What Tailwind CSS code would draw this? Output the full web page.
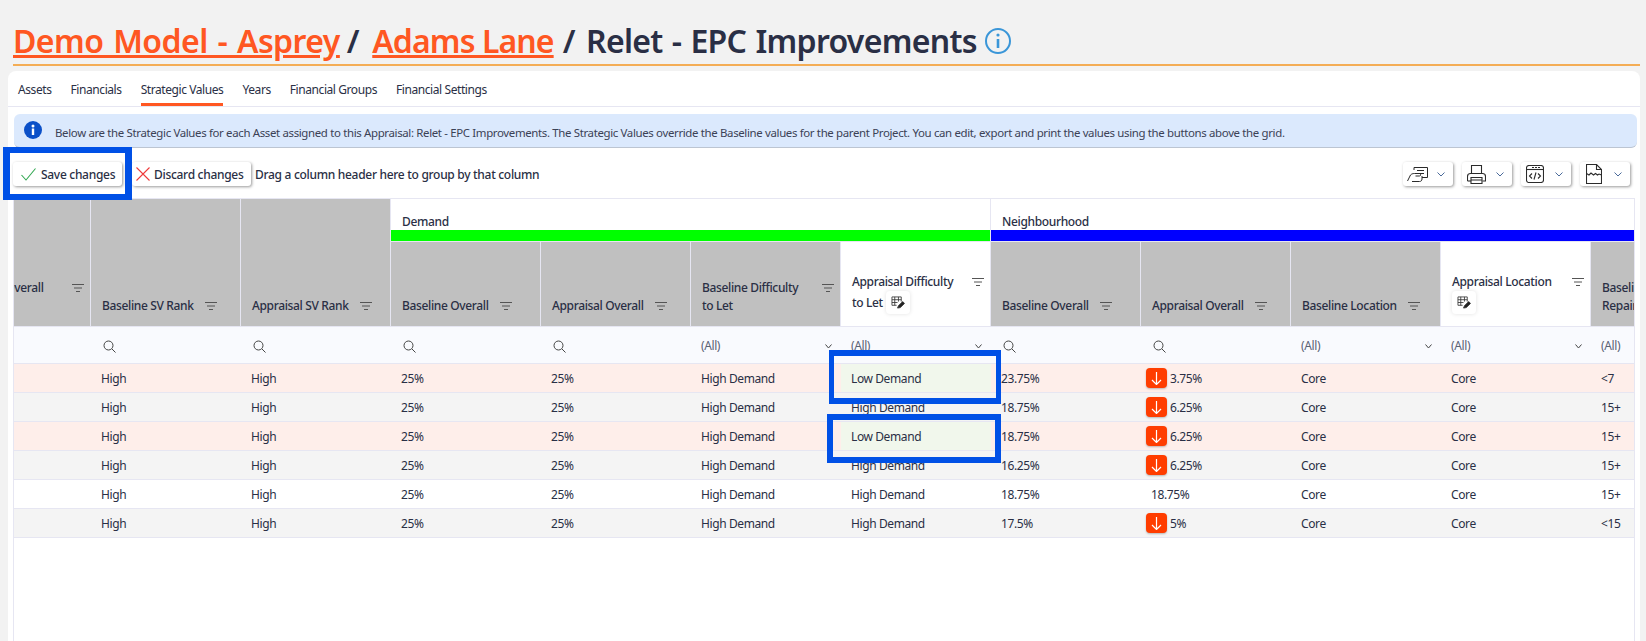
<!DOCTYPE html>
<html lang="en">
<head>
    <meta charset="UTF-8">
    <title>Strategic Values</title>
    <script src="https://cdn.jsdelivr.net/npm/@tailwindcss/browser@4"></script>
</head>
<body class="bg-[#f2f2f2] h-[641px] overflow-hidden relative font-['Noto_Sans',sans-serif] text-[#2a2f45] text-[12px] tracking-[-0.35px]">

    <!-- title -->
    <div class="h-[71px] pl-[13px] pr-[6px]">
        <div class="h-[66px] border-b-2 border-[#f4ad55] flex items-end pb-[1px]">
            <h1 class="text-[32px] leading-[44px] font-semibold flex items-center whitespace-nowrap">
                <a class="text-[#ff5722] underline tracking-[-0.55px] [word-spacing:2px]">Demo Model - Asprey</a>
                <span class="ml-[7px] mr-[13px]">/</span>
                <a class="text-[#ff5722] underline tracking-[-0.9px]">Adams Lane</a>
                <span class="ml-[9px] mr-[11px]">/</span>
                <span class="tracking-[-0.7px] [word-spacing:1.5px]">Relet - EPC Improvements</span>
                <svg class="ml-[8px] w-[26px] h-[26px]" viewBox="0 0 26 26" fill="none" stroke="#3a96d8" stroke-width="2"><circle cx="13" cy="13" r="12"/><path d="M13 11v9" stroke-width="2.6"/><circle cx="13" cy="7" r="1.600" fill="#3a96d8" stroke="none"/></svg>
            </h1>
        </div>
    </div>

    <!-- card -->
    <div class="ml-[8px] mr-[6px] bg-white rounded-t-[8px] h-[570px]">
        <div class="h-[36px] border-b border-[#e6e6f2] flex pl-[10px] gap-[19px] tracking-[-0.42px]">
            <a class="h-[35px] leading-[37px]">Assets</a>
            <a class="h-[35px] leading-[37px]">Financials</a>
            <a class="h-[35px] leading-[37px] border-b-[3px] border-[#ff5722]">Strategic Values</a>
            <a class="h-[35px] leading-[37px]">Years</a>
            <a class="h-[35px] leading-[37px]">Financial Groups</a>
            <a class="h-[35px] leading-[37px]">Financial Settings</a>
        </div>

        <div class="mt-[7px] ml-[6px] mr-[3px] h-[34px] bg-[#dbe9fd] rounded-[6px] border-b border-[#bcc5d2] flex items-center pl-[10px] gap-[13px] text-[11.45px] text-[#3b4256] whitespace-nowrap">
            <svg class="w-[18px] h-[18px] -mt-[2px]" viewBox="0 0 18 18"><circle cx="9" cy="9" r="9" fill="#0b50c8"/><rect x="7.800" y="7.500" width="2.400" height="6.500" fill="#fff"/><circle cx="9" cy="4.900" r="1.500" fill="#fff"/></svg>
            <span class="pt-[4px]">Below are the Strategic Values for each Asset assigned to this Appraisal: Relet - EPC Improvements. The Strategic Values override the Baseline values for the parent Project. You can edit, export and print the values using the buttons above the grid.</span>
        </div>

        <!-- toolbar -->
        <div class="h-[50px] pt-[2px] pl-[5px] pr-[10px] flex items-center font-medium whitespace-nowrap tracking-[-0.3px]">
            <button class="h-[24px] w-[109px] bg-white rounded-[3px] shadow-[1px_1px_3px_rgba(0,0,0,0.4)] flex items-center pl-[8px] gap-[5px]">
                <svg class="w-[15px] h-[13px]" viewBox="0 0 15 13" fill="none" stroke="#34a853" stroke-width="1.100"><path d="M.5 7l4.500 5L14.500 .5"/></svg>
                <span class="pt-[1px]">Save changes</span>
            </button>
            <button class="ml-[10px] h-[24px] w-[119px] bg-white rounded-[3px] shadow-[1px_1px_3px_rgba(0,0,0,0.4)] flex items-center pl-[4px] gap-[4px]">
                <svg class="w-[14px] h-[14px]" viewBox="0 0 14 14" fill="none" stroke="#ee3b3b" stroke-width="1.100"><path d="M.5.5l13 13M13.500.5l-13 13"/></svg>
                <span class="pt-[1px]">Discard changes</span>
            </button>
            <span class="ml-[4px] pt-[1px]">Drag a column header here to group by that column</span>
            <div class="ml-auto flex gap-[9px]">
                <button class="w-[50px] h-[24px] bg-white rounded-[3px] shadow-[1px_1px_3px_rgba(0,0,0,0.4)] flex items-center pl-[4px]">
                    <svg class="w-[21px] h-[15px]" viewBox="0 0 21 15" fill="none" stroke="#2b2b2b" stroke-width="1"><path d="M7 3V.5h13.500v10H15"/><path d="M10 3.500h7M11 6.500h6"/><path d="M.5 14l3-6c1-1 2-1.500 4-1.500h5c1.500 0 1.500 2.500 0 2.500H8.500"/><path d="M5 14.500h7.500c1.500 0 2.500-1 2.500-2.500V9"/></svg>
                    <svg class="ml-auto mr-[8px] w-[8px] h-[5px]" viewBox="0 0 8 5" fill="none" stroke="#4a6a9a"><path d="M.5.500L4 4 7.500.5"/></svg>
                </button>
                <button class="w-[50px] h-[24px] bg-white rounded-[3px] shadow-[1px_1px_3px_rgba(0,0,0,0.4)] flex items-center pl-[5px]">
                    <svg class="w-[19px] h-[19px]" viewBox="0 0 19 19" fill="none" stroke="#2b2b2b" stroke-width="1.100"><path d="M4.500 9V.5h10V9"/><path d="M.5 16v-4.500c0-2 1-3 3-3h12c2 0 3 1 3 3V16h-3"/><path d="M4 16H.5"/><path d="M4 12.500h11v6H4zM4 15h11"/></svg>
                    <svg class="ml-auto mr-[8px] w-[8px] h-[5px]" viewBox="0 0 8 5" fill="none" stroke="#4a6a9a"><path d="M.5.500L4 4 7.500.5"/></svg>
                </button>
                <button class="w-[50px] h-[24px] bg-white rounded-[3px] shadow-[1px_1px_3px_rgba(0,0,0,0.4)] flex items-center pl-[5px]">
                    <svg class="w-[18px] h-[18px]" viewBox="0 0 18 18" fill="none" stroke="#2b2b2b" stroke-width="1.100"><rect x=".5" y=".5" width="17" height="17" rx="2.500"/><path d="M1 4.500h16"/><path d="M6 2.500h9" stroke-dasharray="2 1"/><path d="M6 8.500l-2.500 2.500L6 13.500M12 8.500l2.500 2.500L12 13.500M10 7.500l-2 7"/></svg>
                    <svg class="ml-auto mr-[8px] w-[8px] h-[5px]" viewBox="0 0 8 5" fill="none" stroke="#4a6a9a"><path d="M.5.500L4 4 7.500.5"/></svg>
                </button>
                <button class="w-[50px] h-[24px] bg-white rounded-[3px] shadow-[1px_1px_3px_rgba(0,0,0,0.4)] flex items-center pl-[6px]">
                    <svg class="w-[16px] h-[20px]" viewBox="0 0 16 20" fill="none" stroke="#2b2b2b" stroke-width="1.100"><path d="M.5 19.500V.5h10l5 5v14z"/><path d="M10.500.5v5h5"/><path d="M.5 9.500l2.500 1.500 2-2 2.500 2 2-1.500 2 1.500 1.500-1 2.500 1"/></svg>
                    <svg class="ml-auto mr-[8px] w-[8px] h-[5px]" viewBox="0 0 8 5" fill="none" stroke="#4a6a9a"><path d="M.5.500L4 4 7.500.5"/></svg>
                </button>
            </div>
        </div>

        <!-- grid -->
        <div class="ml-[5px] mr-[5px] h-[443px] border-l border-r border-t border-[#e6e6f2] overflow-hidden">
            <table class="table-fixed w-[1800px] -ml-[73px] border-separate border-spacing-0">
                <colgroup><col class="w-[150px]"><col class="w-[150px]"><col class="w-[150px]"><col class="w-[150px]"><col class="w-[150px]"><col class="w-[150px]"><col class="w-[150px]"><col class="w-[150px]"><col class="w-[150px]"><col class="w-[150px]"><col class="w-[150px]"><col class="w-[150px]"></colgroup>
                <thead class="font-medium">
                    <tr>
                        <th rowspan="2" class="h-[128px] p-0 bg-[#c0c0c0] border-r border-b border-[#e6e6f2] align-bottom text-left font-medium"><div class="flex pl-[11px] pr-[6px] pb-[29px] gap-[10px] leading-[18px]"><span class="flex-1">Appraisal Overall</span><svg class="w-[12px] h-[18px]" viewBox="0 0 12 18" fill="none" stroke="#555"><path d="M0 5.500h12M2 9h8M4 12.500h4"/></svg></div></th>
                        <th rowspan="2" class="p-0 bg-[#c0c0c0] border-r border-b border-[#e6e6f2] align-bottom text-left font-medium"><div class="flex pl-[11px] pr-[6px] pb-[11px] gap-[11px] leading-[18px]"><span>Baseline SV Rank</span><svg class="w-[12px] h-[18px]" viewBox="0 0 12 18" fill="none" stroke="#555"><path d="M0 5.500h12M2 9h8M4 12.500h4"/></svg></div></th>
                        <th rowspan="2" class="p-0 bg-[#c0c0c0] border-r border-b border-[#e6e6f2] align-bottom text-left font-medium"><div class="flex pl-[11px] pr-[6px] pb-[11px] gap-[11px] leading-[18px]"><span>Appraisal SV Rank</span><svg class="w-[12px] h-[18px]" viewBox="0 0 12 18" fill="none" stroke="#555"><path d="M0 5.500h12M2 9h8M4 12.500h4"/></svg></div></th>
                        <th colspan="4" class="h-[43px] p-0 border-r border-b border-[#e6e6f2] text-left font-medium align-top"><div class="h-[31px] pl-[11px] pt-[14px] leading-[18px]">Demand</div><div class="h-[11px] bg-[#00ff00]"></div></th>
                        <th colspan="5" class="p-0 border-b border-[#e6e6f2] text-left font-medium align-top"><div class="h-[31px] pl-[11px] pt-[14px] leading-[18px]">Neighbourhood</div><div class="h-[11px] bg-[#0000ff]"></div></th>
                    </tr>
                    <tr>
                        <th class="h-[85px] p-0 bg-[#c0c0c0] border-r border-b border-[#e6e6f2] align-bottom text-left font-medium"><div class="flex pl-[11px] pr-[6px] pb-[11px] gap-[11px] leading-[18px]"><span>Baseline Overall</span><svg class="w-[12px] h-[18px]" viewBox="0 0 12 18" fill="none" stroke="#555"><path d="M0 5.500h12M2 9h8M4 12.500h4"/></svg></div></th>
                        <th class="p-0 bg-[#c0c0c0] border-r border-b border-[#e6e6f2] align-bottom text-left font-medium"><div class="flex pl-[11px] pr-[6px] pb-[11px] gap-[11px] leading-[18px]"><span>Appraisal Overall</span><svg class="w-[12px] h-[18px]" viewBox="0 0 12 18" fill="none" stroke="#555"><path d="M0 5.500h12M2 9h8M4 12.500h4"/></svg></div></th>
                        <th class="p-0 bg-[#c0c0c0] border-r border-b border-[#e6e6f2] align-bottom text-left font-medium"><div class="flex pl-[11px] pr-[6px] pb-[11px] gap-[11px] leading-[18px]"><span class="flex-1">Baseline Difficulty<br>to Let</span><svg class="w-[12px] h-[18px]" viewBox="0 0 12 18" fill="none" stroke="#555"><path d="M0 5.500h12M2 9h8M4 12.500h4"/></svg></div></th>
                        <th class="p-0 bg-white border-r border-b border-[#e6e6f2] align-bottom text-left font-medium"><div class="flex pl-[11px] pr-[6px] pb-[12px] leading-[18px]"><div class="flex-1"><div>Appraisal Difficulty</div><div class="flex items-center h-[23px]">to Let<span class="ml-[3px] w-[24px] h-[23px] rounded-[4px] shadow-[0_0_4px_rgba(0,0,0,0.12)] flex items-center justify-center"><svg class="w-[14px] h-[13px]" viewBox="0 0 15 14" fill="none" stroke="#333" stroke-width=".9"><path d="M1 1h10v5M1 1v9h5M1 4h10M1 7h6M4 1v9M8 1v5" /><path d="M7 13l1-2.500 4.500-4.500 2 2L10 12.500z" fill="#222"/></svg></span></div></div><svg class="w-[12px] h-[18px]" viewBox="0 0 12 18" fill="none" stroke="#555"><path d="M0 5.500h12M2 9h8M4 12.500h4"/></svg></div></th>
                        <th class="p-0 bg-[#c0c0c0] border-r border-b border-[#e6e6f2] align-bottom text-left font-medium"><div class="flex pl-[11px] pr-[6px] pb-[11px] gap-[11px] leading-[18px]"><span>Baseline Overall</span><svg class="w-[12px] h-[18px]" viewBox="0 0 12 18" fill="none" stroke="#555"><path d="M0 5.500h12M2 9h8M4 12.500h4"/></svg></div></th>
                        <th class="p-0 bg-[#c0c0c0] border-r border-b border-[#e6e6f2] align-bottom text-left font-medium"><div class="flex pl-[11px] pr-[6px] pb-[11px] gap-[11px] leading-[18px]"><span>Appraisal Overall</span><svg class="w-[12px] h-[18px]" viewBox="0 0 12 18" fill="none" stroke="#555"><path d="M0 5.500h12M2 9h8M4 12.500h4"/></svg></div></th>
                        <th class="p-0 bg-[#c0c0c0] border-r border-b border-[#e6e6f2] align-bottom text-left font-medium"><div class="flex pl-[11px] pr-[6px] pb-[11px] gap-[11px] leading-[18px]"><span>Baseline Location</span><svg class="w-[12px] h-[18px]" viewBox="0 0 12 18" fill="none" stroke="#555"><path d="M0 5.500h12M2 9h8M4 12.500h4"/></svg></div></th>
                        <th class="p-0 bg-white border-r border-b border-[#e6e6f2] align-bottom text-left font-medium"><div class="flex pl-[11px] pr-[6px] pb-[12px] leading-[18px]"><div class="flex-1"><div>Appraisal Location</div><div class="flex items-center h-[23px]"><span class="w-[24px] h-[23px] rounded-[4px] shadow-[0_0_4px_rgba(0,0,0,0.12)] flex items-center justify-center"><svg class="w-[14px] h-[13px]" viewBox="0 0 15 14" fill="none" stroke="#333" stroke-width=".9"><path d="M1 1h10v5M1 1v9h5M1 4h10M1 7h6M4 1v9M8 1v5" /><path d="M7 13l1-2.500 4.500-4.500 2 2L10 12.500z" fill="#222"/></svg></span></div></div><svg class="w-[12px] h-[18px]" viewBox="0 0 12 18" fill="none" stroke="#555"><path d="M0 5.500h12M2 9h8M4 12.500h4"/></svg></div></th>
                        <th class="p-0 bg-[#c0c0c0] border-b border-[#e6e6f2] align-bottom text-left font-medium"><div class="pl-[11px] pb-[11px] leading-[18px] whitespace-nowrap">Baseline Condition of<br>Repair</div></th>
                    </tr>
                </thead>
                <tbody class="[&_td]:border-b [&_td]:border-[#e6e6f2] [&_td]:p-0 [&_td]:pl-[10px] [&_td]:pt-[2px] [&_td]:h-[29px] [&_td]:whitespace-nowrap tracking-[-0.4px]">
                    <tr class="bg-[#f9fafe] [&_td]:!h-[37px] text-[#5b6275]">
                        <td></td>
                        <td><svg class="ml-[2px] w-[13px] h-[13px]" viewBox="0 0 13 13" fill="none" stroke="#444"><circle cx="5.500" cy="5.500" r="4.500"/><path d="M9 9l3.500 3.500"/></svg></td>
                        <td><svg class="ml-[2px] w-[13px] h-[13px]" viewBox="0 0 13 13" fill="none" stroke="#444"><circle cx="5.500" cy="5.500" r="4.500"/><path d="M9 9l3.500 3.500"/></svg></td>
                        <td><svg class="ml-[2px] w-[13px] h-[13px]" viewBox="0 0 13 13" fill="none" stroke="#444"><circle cx="5.500" cy="5.500" r="4.500"/><path d="M9 9l3.500 3.500"/></svg></td>
                        <td><svg class="ml-[2px] w-[13px] h-[13px]" viewBox="0 0 13 13" fill="none" stroke="#444"><circle cx="5.500" cy="5.500" r="4.500"/><path d="M9 9l3.500 3.500"/></svg></td>
                        <td class="!pr-[9px]"><div class="flex items-center justify-between">(All)<svg class="w-[7px] h-[5px]" viewBox="0 0 7 5" fill="none" stroke="#444"><path d="M.5.500L3.500 4l3-3.500"/></svg></div></td>
                        <td class="!pr-[9px]"><div class="flex items-center justify-between">(All)<svg class="w-[7px] h-[5px]" viewBox="0 0 7 5" fill="none" stroke="#444"><path d="M.5.500L3.500 4l3-3.500"/></svg></div></td>
                        <td><svg class="ml-[2px] w-[13px] h-[13px]" viewBox="0 0 13 13" fill="none" stroke="#444"><circle cx="5.500" cy="5.500" r="4.500"/><path d="M9 9l3.500 3.500"/></svg></td>
                        <td><svg class="ml-[2px] w-[13px] h-[13px]" viewBox="0 0 13 13" fill="none" stroke="#444"><circle cx="5.500" cy="5.500" r="4.500"/><path d="M9 9l3.500 3.500"/></svg></td>
                        <td class="!pr-[9px]"><div class="flex items-center justify-between">(All)<svg class="w-[7px] h-[5px]" viewBox="0 0 7 5" fill="none" stroke="#444"><path d="M.5.500L3.500 4l3-3.500"/></svg></div></td>
                        <td class="!pr-[9px]"><div class="flex items-center justify-between">(All)<svg class="w-[7px] h-[5px]" viewBox="0 0 7 5" fill="none" stroke="#444"><path d="M.5.500L3.500 4l3-3.500"/></svg></div></td>
                        <td>(All)</td>
                    </tr>
                    <tr class="bg-[#feeeea]">
                        <td></td><td>High</td><td>High</td><td>25%</td><td>25%</td><td>High Demand</td><td class="bg-[#f1f7ec]">Low Demand</td><td>23.75%</td>
                        <td class="!pl-[5px] !pt-0"><div class="flex items-center gap-[3px]"><span class="w-[21px] h-[20px] bg-[#ff3d00] rounded-[4px] shadow-[0_1px_2px_rgba(0,0,0,0.25)] flex items-center justify-center"><svg class="w-[11px] h-[13px]" viewBox="0 0 11 13" fill="none" stroke="#fff" stroke-width="1.200"><path d="M5.500 0v12M1 8l4.500 4.500L10 8"/></svg></span><span class="pt-[2px]">3.75%</span></div></td>
                        <td>Core</td><td>Core</td><td>&lt;7</td>
                    </tr>
                    <tr class="bg-[#f4f4f4]">
                        <td></td><td>High</td><td>High</td><td>25%</td><td>25%</td><td>High Demand</td><td>High Demand</td><td>18.75%</td>
                        <td class="!pl-[5px] !pt-0"><div class="flex items-center gap-[3px]"><span class="w-[21px] h-[20px] bg-[#ff3d00] rounded-[4px] shadow-[0_1px_2px_rgba(0,0,0,0.25)] flex items-center justify-center"><svg class="w-[11px] h-[13px]" viewBox="0 0 11 13" fill="none" stroke="#fff" stroke-width="1.200"><path d="M5.500 0v12M1 8l4.500 4.500L10 8"/></svg></span><span class="pt-[2px]">6.25%</span></div></td>
                        <td>Core</td><td>Core</td><td>15+</td>
                    </tr>
                    <tr class="bg-[#feeeea]">
                        <td></td><td>High</td><td>High</td><td>25%</td><td>25%</td><td>High Demand</td><td class="bg-[#f1f7ec]">Low Demand</td><td>18.75%</td>
                        <td class="!pl-[5px] !pt-0"><div class="flex items-center gap-[3px]"><span class="w-[21px] h-[20px] bg-[#ff3d00] rounded-[4px] shadow-[0_1px_2px_rgba(0,0,0,0.25)] flex items-center justify-center"><svg class="w-[11px] h-[13px]" viewBox="0 0 11 13" fill="none" stroke="#fff" stroke-width="1.200"><path d="M5.500 0v12M1 8l4.500 4.500L10 8"/></svg></span><span class="pt-[2px]">6.25%</span></div></td>
                        <td>Core</td><td>Core</td><td>15+</td>
                    </tr>
                    <tr class="bg-[#f4f4f4]">
                        <td></td><td>High</td><td>High</td><td>25%</td><td>25%</td><td>High Demand</td><td>High Demand</td><td>16.25%</td>
                        <td class="!pl-[5px] !pt-0"><div class="flex items-center gap-[3px]"><span class="w-[21px] h-[20px] bg-[#ff3d00] rounded-[4px] shadow-[0_1px_2px_rgba(0,0,0,0.25)] flex items-center justify-center"><svg class="w-[11px] h-[13px]" viewBox="0 0 11 13" fill="none" stroke="#fff" stroke-width="1.200"><path d="M5.500 0v12M1 8l4.500 4.500L10 8"/></svg></span><span class="pt-[2px]">6.25%</span></div></td>
                        <td>Core</td><td>Core</td><td>15+</td>
                    </tr>
                    <tr class="bg-white">
                        <td></td><td>High</td><td>High</td><td>25%</td><td>25%</td><td>High Demand</td><td>High Demand</td><td>18.75%</td><td>18.75%</td><td>Core</td><td>Core</td><td>15+</td>
                    </tr>
                    <tr class="bg-[#f4f4f4]">
                        <td></td><td>High</td><td>High</td><td>25%</td><td>25%</td><td>High Demand</td><td>High Demand</td><td>17.5%</td>
                        <td class="!pl-[5px] !pt-0"><div class="flex items-center gap-[3px]"><span class="w-[21px] h-[20px] bg-[#ff3d00] rounded-[4px] shadow-[0_1px_2px_rgba(0,0,0,0.25)] flex items-center justify-center"><svg class="w-[11px] h-[13px]" viewBox="0 0 11 13" fill="none" stroke="#fff" stroke-width="1.200"><path d="M5.500 0v12M1 8l4.500 4.500L10 8"/></svg></span><span class="pt-[2px]">5%</span></div></td>
                        <td>Core</td><td>Core</td><td>&lt;15</td>
                    </tr>
                </tbody>
            </table>
        </div>
    </div>

    <!-- annotation boxes drawn over the screenshot -->
    <div class="absolute left-[3px] top-[147px] w-[129px] h-[53px] border-x-[7px] border-y-[6px] border-[#0050e6]"></div>
    <div class="absolute left-[829px] top-[350px] w-[172px] h-[54px] border-x-[5px] border-y-[6px] border-[#0050e6]"></div>
    <div class="absolute left-[827px] top-[414px] w-[174px] h-[49px] border-x-[6px] border-y-[6px] border-[#0050e6]"></div>
</body>
</html>
